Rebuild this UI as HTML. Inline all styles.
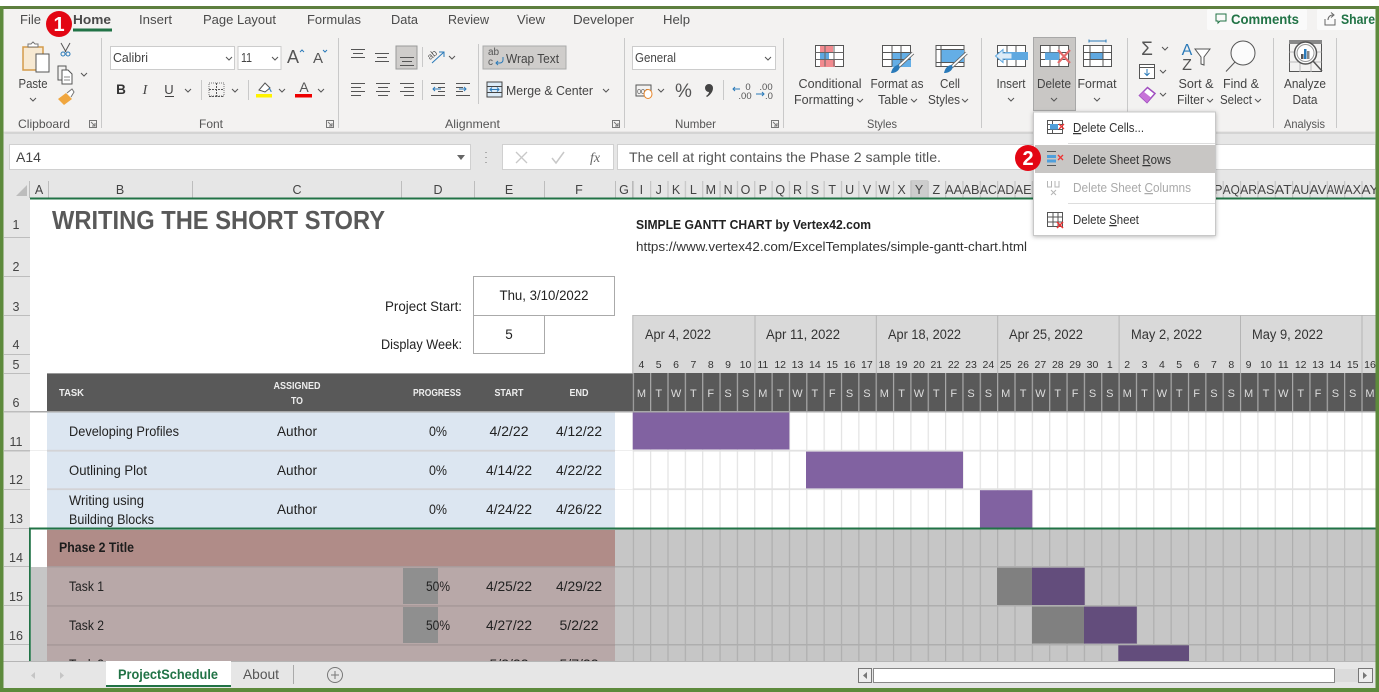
<!DOCTYPE html>
<html><head><meta charset="utf-8"><style>
html,body{margin:0;padding:0;background:#fff;width:1379px;height:692px;overflow:hidden}
svg{display:block}
text{font-family:"Liberation Sans",sans-serif;font-size:12px;fill:#444}
.m{text-anchor:middle}.e{text-anchor:end}
.t{font-size:13px;fill:#4a4a4a}
.r{font-size:12.5px;fill:#444}
.g{font-size:12px;fill:#555}
.c{font-size:12.5px;fill:#444}
.d{font-size:13.5px;fill:#222}
.h{font-size:10px;fill:#eee;font-weight:bold}
.n{font-size:10.5px;fill:#333}
.u{text-decoration:underline}
.ch{fill:none;stroke:#555;stroke-width:1}
</style></head><body>
<svg width="1379" height="692" viewBox="0 0 1379 692" xmlns="http://www.w3.org/2000/svg">
<defs>
<pattern id="gw" x="632.7" y="0" width="17.35" height="10" patternUnits="userSpaceOnUse"><rect x="0" width="1.2" height="10" fill="#e2e2e2"/></pattern>
<pattern id="gg" x="632.7" y="0" width="17.35" height="10" patternUnits="userSpaceOnUse"><rect x="0" width="1.2" height="10" fill="#aeaeae"/></pattern>
<pattern id="gd" x="632.7" y="0" width="17.35" height="10" patternUnits="userSpaceOnUse"><rect x="0" width="1.2" height="10" fill="#a9a9a9"/></pattern>
<filter id="sh" x="-10%" y="-10%" width="120%" height="120%"><feDropShadow dx="0" dy="1" stdDeviation="2" flood-color="#000" flood-opacity=".28"/></filter>
<filter id="bl"><feGaussianBlur stdDeviation="1.5"/></filter>
</defs>

<rect width="1379" height="692" fill="#fff"/>

<!-- ribbon -->
<rect x="3" y="9" width="1373" height="124" fill="#f3f2f1"/>
<rect x="3" y="132" width="1373" height="3" fill="#bbb" filter="url(#bl)"/>
<rect x="3" y="134" width="1373" height="46" fill="#e6e6e6"/>

<!-- tabs -->
<text class="t" x="20" y="24" textLength="21" lengthAdjust="spacingAndGlyphs">File</text>
<text class="t" x="73" y="24" textLength="38" lengthAdjust="spacingAndGlyphs" style="font-weight:bold;fill:#4a4a4a">Home</text>
<rect x="73" y="28.5" width="39" height="3" fill="#217346"/>
<text class="t" x="139" y="24" textLength="33" lengthAdjust="spacingAndGlyphs">Insert</text>
<text class="t" x="203" y="24" textLength="73" lengthAdjust="spacingAndGlyphs">Page Layout</text>
<text class="t" x="307" y="24" textLength="54" lengthAdjust="spacingAndGlyphs">Formulas</text>
<text class="t" x="391" y="24" textLength="27" lengthAdjust="spacingAndGlyphs">Data</text>
<text class="t" x="448" y="24" textLength="41" lengthAdjust="spacingAndGlyphs">Review</text>
<text class="t" x="517" y="24" textLength="28" lengthAdjust="spacingAndGlyphs">View</text>
<text class="t" x="573" y="24" textLength="61" lengthAdjust="spacingAndGlyphs">Developer</text>
<text class="t" x="663" y="24" textLength="27" lengthAdjust="spacingAndGlyphs">Help</text>

<rect x="1207" y="9" width="100" height="21" rx="2" fill="#fafafa"/>
<rect x="1317" y="9" width="58" height="21" rx="2" fill="#fafafa"/>
<path d="M1216 14h10v7h-6l-2 2v-2h-2z" fill="none" stroke="#217346"/>
<text x="1231" y="24" textLength="68" lengthAdjust="spacingAndGlyphs" style="font-size:13.5px;font-weight:bold;fill:#217346">Comments</text>
<path d="M1325 19v6h10v-6M1328 20c0-3 2-5 5-5M1331 12.500l3 2.500-3 2.500" fill="none" stroke="#666"/>
<text x="1341" y="24" textLength="34" lengthAdjust="spacingAndGlyphs" style="font-size:13.5px;font-weight:bold;fill:#217346">Share</text>

<!-- ribbon separators -->
<g fill="#c9c9c9">
<rect x="101" y="38" width="1" height="90"/><rect x="338" y="38" width="1" height="90"/><rect x="624" y="38" width="1" height="90"/><rect x="783" y="38" width="1" height="90"/><rect x="981" y="38" width="1" height="90"/><rect x="1127" y="38" width="1" height="90"/><rect x="1273" y="38" width="1" height="90"/><rect x="1336" y="38" width="1" height="90"/>
<rect x="201" y="80" width="1" height="20"/><rect x="248" y="80" width="1" height="20"/><rect x="422" y="47" width="1" height="20"/><rect x="422" y="80" width="1" height="20"/><rect x="478" y="44" width="1" height="60"/><rect x="723" y="80" width="1" height="20"/>
</g>

<!-- group labels -->
<text class="g" x="18" y="128" textLength="52" lengthAdjust="spacingAndGlyphs">Clipboard</text>
<text class="g" x="199" y="128" textLength="24" lengthAdjust="spacingAndGlyphs">Font</text>
<text class="g" x="445" y="128" textLength="55" lengthAdjust="spacingAndGlyphs">Alignment</text>
<text class="g" x="675" y="128" textLength="41" lengthAdjust="spacingAndGlyphs">Number</text>
<text class="g" x="867" y="128" textLength="30" lengthAdjust="spacingAndGlyphs">Styles</text>
<text class="g" x="1284" y="128" textLength="41" lengthAdjust="spacingAndGlyphs">Analysis</text>
<g fill="none" stroke="#777"><path d="M89.500 120.500h7v7h-7zM91 122l4 4M95 123v3h-3"/><path d="M326.500 120.500h7v7h-7zM328 122l4 4M332 123v3h-3"/><path d="M612.500 120.500h7v7h-7zM614 122l4 4M618 123v3h-3"/><path d="M771.500 120.500h7v7h-7zM773 122l4 4M777 123v3h-3"/></g>

<!-- clipboard -->
<path d="M23 47h20v23h-20z" fill="#f7e9d2" stroke="#d49b4a" stroke-width="1.5"/>
<path d="M28 47v-3h3l2-2 2 2h3v3z" fill="#fff" stroke="#777"/>
<rect x="36" y="54" width="13" height="18" fill="#fff" stroke="#555"/>
<text class="r" x="33" y="88" text-anchor="middle" textLength="29" lengthAdjust="spacingAndGlyphs">Paste</text>
<path class="ch" d="M30 98l3 3 3-3"/>
<path d="M61 43l5 9M70 43l-5 9" fill="none" stroke="#555"/><circle cx="63" cy="54" r="2" fill="none" stroke="#2a7ab9"/><circle cx="68" cy="54" r="2" fill="none" stroke="#2a7ab9"/>
<path d="M58 66h8v14h-8z" fill="#f3f2f1" stroke="#555"/><path d="M62 70h6l4 4v10h-10z" fill="#fff" stroke="#555"/><path d="M64 77h6M64 80h6" stroke="#888"/>
<path class="ch" d="M81 73l3 3 3-3"/>
<path d="M58 99l8-6 6 6-8 6z" fill="#f0a63e"/><path d="M67 93l5-4 2 3-3 5" fill="#fff" stroke="#777"/>

<!-- font -->
<rect x="110.500" y="46.500" width="124" height="23" fill="#fff" stroke="#ccc"/>
<text class="c" x="113" y="62" textLength="35" lengthAdjust="spacingAndGlyphs">Calibri</text>
<path class="ch" d="M226 57l3 3 3-3"/>
<rect x="238" y="46.500" width="43" height="23" fill="#fff" stroke="#ccc"/>
<text class="c" x="241" y="62" textLength="11" lengthAdjust="spacingAndGlyphs">11</text>
<path class="ch" d="M272 57l3 3 3-3"/>
<text x="293" y="63" class="m" style="font-size:18px;fill:#555">A</text><path d="M300 52l2-2 2 2" fill="none" stroke="#2a7ab9"/>
<text x="318" y="63" class="m" style="font-size:15px;fill:#555">A</text><path d="M323 50l2 2 2-2" fill="none" stroke="#2a7ab9"/>
<text x="121" y="94" class="m" style="font-weight:bold;fill:#333;font-size:13.5px">B</text>
<text x="145" y="94" class="m" style="font-style:italic;font-family:'Liberation Serif',serif;fill:#444;font-size:14px">I</text>
<text x="169" y="94" class="m" style="fill:#444;font-size:13px">U</text><rect x="165" y="96" width="9" height="1" fill="#444"/>
<path class="ch" d="M185 89l3 3 3-3"/>
<rect x="209" y="83" width="15" height="13" fill="none" stroke="#777" stroke-dasharray="1 1"/><path d="M209 96.500h15M216.500 83v13M209 89.500h15" stroke="#555" stroke-dasharray="2 1" fill="none"/>
<path class="ch" d="M232 89l3 3 3-3"/>
<path d="M259 90l6-7 5 5-5 4z" fill="#fff" stroke="#555"/><path d="M269 88l2 3v1" stroke="#2a7ab9" fill="none"/><rect x="256" y="94" width="16" height="3.500" fill="#fff200"/>
<path class="ch" d="M279 89l3 3 3-3"/>
<text x="304" y="92" class="m" style="font-size:14px;fill:#555">A</text><rect x="295" y="94" width="17" height="3.500" fill="#e00"/>
<path class="ch" d="M318 89l3 3 3-3"/>

<!-- alignment -->
<g stroke="#555" fill="none">
<path d="M351 49.500h14M353 53.500h10M351 57.500h14"/>
<path d="M375 53.500h14M377 57.500h10M375 61.500h14"/>
<path d="M351 83.500h14M351 87.500h10M351 91.500h14M351 95.500h10"/>
<path d="M376 83.500h14M378 87.500h10M376 91.500h14M378 95.500h10"/>
<path d="M400 83.500h14M404 87.500h10M400 91.500h14M404 95.500h10"/>
<path d="M431 83.500h14M438 87.500h7M438 91.500h7M431 95.500h14"/>
<path d="M456 83.500h14M456 87.500h7M456 91.500h7M456 95.500h14"/>
</g>
<rect x="396" y="46" width="21" height="23" fill="#cfcdcb" stroke="#999"/>
<path d="M400 57.500h14M402 61.500h10M400 65.500h14" stroke="#555" fill="none"/>
<path d="M432 63l12-11M439 52h5v5" stroke="#2a7ab9" fill="none"/><text x="434" y="57" class="m" style="font-size:9px;fill:#555" transform="rotate(-40 434 57)">ab</text>
<path class="ch" d="M449 56l3 3 3-3"/>
<path d="M433 89h8M435 87l-2 2 2 2" stroke="#2a7ab9" fill="none"/>
<path d="M459 89h7M464 87l2 2-2 2" stroke="#2a7ab9" fill="none"/>
<rect x="483" y="46" width="83" height="23" fill="#cfcdcb" stroke="#aaa"/>
<text x="488" y="55" style="font-size:10px;fill:#555">ab</text><text x="488" y="65" style="font-size:10px;fill:#555">c</text>
<path d="M503 57v3a3 3 0 0 1-3 3h-4M498 61l-2 2 2 2" stroke="#2a7ab9" fill="none"/>
<text class="c" x="506" y="63" textLength="53" lengthAdjust="spacingAndGlyphs">Wrap Text</text>
<rect x="487" y="82" width="15" height="15" fill="#dcebf7" stroke="#444"/><path d="M487 86.500h15M487 92.500h15" stroke="#444"/><path d="M490 89.500h9M492 87.500l-2 2 2 2M497 87.500l2 2-2 2" stroke="#2a7ab9" fill="none"/>
<text class="c" x="506" y="95" textLength="87" lengthAdjust="spacingAndGlyphs">Merge &amp; Center</text>
<path class="ch" d="M603 89l3 3 3-3"/>

<!-- number -->
<rect x="632.500" y="46.500" width="143" height="23" fill="#fff" stroke="#ccc"/>
<text class="c" x="635" y="62" textLength="41" lengthAdjust="spacingAndGlyphs">General</text>
<path class="ch" d="M765 57l3 3 3-3"/>
<rect x="636" y="85" width="15" height="11" fill="#f3f2f1" stroke="#555"/><text x="643" y="94" class="m" style="font-size:7px;fill:#555">000</text><ellipse cx="648" cy="94" rx="4" ry="4.500" fill="#fff" stroke="#e8862a"/>
<path class="ch" d="M658 89l3 3 3-3"/>
<text x="683.500" y="97" class="m" style="font-size:19px;fill:#555">%</text>
<path d="M709 84a4 4 0 0 1 4 4c0 4-3 7-6 9l-1-1c2-1 3-3 3-4a4 4 0 0 1 0-8z" fill="#444"/>
<text x="748" y="90" style="font-size:9.500px;fill:#555" class="m">0</text><text x="745" y="99" style="font-size:9.500px;fill:#555" class="m">.00</text><path d="M733 89h7M735 87l-2 2 2 2" stroke="#2a7ab9" fill="none"/>
<text x="766" y="90" style="font-size:9.500px;fill:#555" class="m">.00</text><text x="769" y="99" style="font-size:9.500px;fill:#555" class="m">.0</text><path d="M756 94h8M762 92l2 2-2 2" stroke="#2a7ab9" fill="none"/>

<!-- conditional formatting -->
<rect x="815.500" y="45.500" width="28" height="21" fill="#fff" stroke="#555"/>
<path d="M820 46h13v7h-13zM820 60h15v7h-15z" fill="#f28a8f"/><rect x="820" y="53" width="9" height="7" fill="#5fa8e0"/>
<path d="M815.500 52.500h28M815.500 59.500h28M825 45.500v21M834 45.500v21" stroke="#666" fill="none"/>
<text class="r" x="830" y="88" text-anchor="middle" textLength="63" lengthAdjust="spacingAndGlyphs">Conditional</text>
<text class="r" x="794" y="104" textLength="60" lengthAdjust="spacingAndGlyphs">Formatting</text><path class="ch" d="M857 99l3 3 3-3"/>
<!-- format as table -->
<rect x="882.500" y="45.500" width="28" height="21" fill="#fff" stroke="#555"/>
<path d="M892 53h19v14h-19z" fill="#64aee6"/><path d="M882.500 52.500h28M882.500 59.500h28M892 45.500v21M901 45.500v21" stroke="#555" fill="none"/>
<path d="M913 53l-15 14" stroke="#666" stroke-width="3.500"/><path d="M913 53l-15 14" stroke="#fff" stroke-width="1.800"/><path d="M891 73c1-5 4-8 8-8 2 4-2 8-8 8z" fill="#2a7ab9"/>
<text class="r" x="897" y="88" text-anchor="middle" textLength="53" lengthAdjust="spacingAndGlyphs">Format as</text>
<text class="r" x="878" y="104" textLength="30" lengthAdjust="spacingAndGlyphs">Table</text><path class="ch" d="M911 99l3 3 3-3"/>
<!-- cell styles -->
<rect x="936" y="45.500" width="28" height="21" fill="#fff" stroke="#555"/>
<rect x="941" y="50" width="23" height="12" fill="#64aee6"/><path d="M936 49.500h28M936 62.500h28M941 45.500v21" stroke="#555" fill="none"/>
<path d="M966.500 53l-15 14" stroke="#666" stroke-width="3.500"/><path d="M966.500 53l-15 14" stroke="#fff" stroke-width="1.800"/><path d="M944 73c1-5 4-8 8-8 2 4-2 8-8 8z" fill="#2a7ab9"/>
<text class="r" x="950" y="88" text-anchor="middle" textLength="20" lengthAdjust="spacingAndGlyphs">Cell</text>
<text class="r" x="928" y="104" textLength="32" lengthAdjust="spacingAndGlyphs">Styles</text><path class="ch" d="M962 99l3 3 3-3"/>

<!-- insert -->
<rect x="997.500" y="45.500" width="28" height="21" fill="#fff" stroke="#555"/>
<path d="M997.500 52.500h28M997.500 59.500h28M1007 45.500v21M1016 45.500v21" stroke="#555" fill="none"/>
<rect x="1005" y="52" width="23" height="8" fill="#5fa8e0"/>
<path d="M1003 49.500l-7.500 6.500 7.500 6.500v-3.500h9v-6h-9z" fill="#dcebf7" stroke="#5fa8e0"/>
<text class="r" x="1011" y="88" text-anchor="middle" textLength="29" lengthAdjust="spacingAndGlyphs">Insert</text>
<path class="ch" d="M1008 98l3 3 3-3"/>
<!-- delete -->
<rect x="1033.500" y="37.500" width="42" height="73" fill="#c9c7c5" stroke="#a8a8a8"/>
<rect x="1040.500" y="45.500" width="28" height="21" fill="#fff" stroke="#555"/>
<path d="M1040.500 52.500h28M1040.500 59.500h28M1050 45.500v21M1059 45.500v21" stroke="#555" fill="none"/>
<rect x="1045" y="52.500" width="14" height="7.500" fill="#5fa8e0"/>
<path d="M1058 50l12 13M1070 50l-12 13" stroke="#e46a6a" stroke-width="2.200"/>
<text class="r" x="1054" y="88" text-anchor="middle" textLength="34" lengthAdjust="spacingAndGlyphs">Delete</text>
<path class="ch" d="M1051 98l3 3 3-3"/>
<!-- format -->
<path d="M1089 41h17M1089 39.500v3M1106 39.500v3" stroke="#2a7ab9" fill="none"/>
<rect x="1083.500" y="45.500" width="28" height="21" fill="#fff" stroke="#555"/>
<rect x="1090" y="52" width="13" height="8" fill="#5fa8e0"/>
<path d="M1083.500 52.500h28M1083.500 59.500h28M1090 45.500v21M1103 45.500v21" stroke="#555" fill="none"/>
<text class="r" x="1097" y="88" text-anchor="middle" textLength="39" lengthAdjust="spacingAndGlyphs">Format</text>
<path class="ch" d="M1094 98l3 3 3-3"/>

<!-- editing -->
<text x="1147" y="55" class="m" style="font-size:19px;fill:#555">Σ</text><path class="ch" d="M1162 47l3 3 3-3"/>
<rect x="1139.500" y="64.500" width="15" height="14" fill="#fff" stroke="#555"/><path d="M1139.500 67.500h15" stroke="#555"/><path d="M1147 69v6M1144.500 73l2.500 2.500 2.500-2.500" stroke="#2a7ab9" fill="none"/><path class="ch" d="M1160 70l3 3 3-3"/>
<path d="M1139.500 95.500l8-8 7.500 6-8 9z" fill="#fff" stroke="#a04fc0" stroke-width="1.500"/><path d="M1139.500 95.500l4-4 7.500 6-4 5z" fill="#c774d8"/><path class="ch" d="M1160 93l3 3 3-3"/>
<text x="1187" y="55" class="m" style="font-size:16px;fill:#2a7ab9">A</text><text x="1187" y="70" class="m" style="font-size:16px;fill:#555">Z</text>
<path d="M1195 49h15l-6 8v8l-3-1v-7z" fill="#fff" stroke="#555"/>
<text class="r" x="1196" y="88" text-anchor="middle" textLength="35" lengthAdjust="spacingAndGlyphs">Sort &amp;</text>
<text class="r" x="1177" y="104" textLength="27" lengthAdjust="spacingAndGlyphs">Filter</text><path class="ch" d="M1207 99l3 3 3-3"/>
<circle cx="1243" cy="53" r="12" fill="#fbfbfb" stroke="#555"/><path d="M1235 62l-9 9.500" stroke="#555"/>
<text class="r" x="1241" y="88" text-anchor="middle" textLength="36" lengthAdjust="spacingAndGlyphs">Find &amp;</text>
<text class="r" x="1220" y="104" textLength="32" lengthAdjust="spacingAndGlyphs">Select</text><path class="ch" d="M1255 99l3 3 3-3"/>
<!-- analyze -->
<rect x="1289.500" y="41.500" width="32" height="30" fill="#f3f2f1" stroke="#555"/><rect x="1289" y="40" width="33" height="4" fill="#888"/>
<path d="M1289.500 52h32M1289.500 62h32M1300 45v27M1311 45v27" stroke="#bbb"/>
<circle cx="1305.500" cy="53" r="11" fill="#fff" stroke="#555" stroke-width="1.500"/><circle cx="1305.500" cy="53" r="8.500" fill="#fff" stroke="#999"/><path d="M1313 61l9 10" stroke="#555" stroke-width="1.500"/>
<rect x="1301" y="54" width="2.500" height="5" fill="#555"/><rect x="1304" y="49" width="2.500" height="10" fill="#2a7ab9"/><rect x="1307" y="51" width="2.500" height="8" fill="#888"/>
<text class="r" x="1305" y="88" text-anchor="middle" textLength="42" lengthAdjust="spacingAndGlyphs">Analyze</text>
<text class="r" x="1305" y="104" text-anchor="middle" textLength="25" lengthAdjust="spacingAndGlyphs">Data</text>

<!-- formula bar -->
<rect x="9.500" y="144.500" width="461" height="25" fill="#fff" stroke="#d0d0d0"/>
<text x="16" y="162" textLength="25" lengthAdjust="spacingAndGlyphs" style="font-size:13.5px;fill:#444">A14</text>
<path d="M457 155l4 5 4-5z" fill="#666"/>
<path d="M486 152v1M486 157v1M486 162v1" stroke="#999" stroke-width="1.500"/>
<rect x="502.500" y="144.500" width="111" height="25" fill="#fff" stroke="#d0d0d0"/>
<path d="M516 152l11 11M527 152l-11 11" stroke="#c8c8c8" stroke-width="1.300"/>
<path d="M552 158l4 5 8-11" stroke="#c8c8c8" stroke-width="1.500" fill="none"/>
<text x="595" y="162" class="m" style="font-family:'Liberation Serif',serif;font-style:italic;font-size:14px;fill:#666">fx</text>
<rect x="617.500" y="144.500" width="758" height="25" fill="#fff" stroke="#d0d0d0"/>
<text x="629" y="162" textLength="312" lengthAdjust="spacingAndGlyphs" style="font-size:14px;fill:#555">The cell at right contains the Phase 2 sample title.</text>

<!-- column headings -->
<rect x="3" y="180" width="1373" height="18" fill="#e6e6e6"/>
<rect x="3" y="198" width="27" height="463" fill="#e6e6e6"/>
<path d="M16 196h11v-11z" fill="#bdbdbd"/>
<rect x="910.500" y="180" width="17.350" height="18" fill="#cdcdcd"/>
<g fill="#bdbdbd">
<rect x="29" y="181" width="1" height="17"/><rect x="48" y="181" width="1" height="17"/><rect x="192" y="181" width="1" height="17"/><rect x="401" y="181" width="1" height="17"/><rect x="474" y="181" width="1" height="17"/><rect x="544" y="181" width="1" height="17"/><rect x="615" y="181" width="1" height="17"/><rect x="632" y="181" width="1" height="17"/>
</g>
<rect x="632" y="181" width="744" height="17" fill="url(#gg)" opacity=".6"/>
<g>
<text class="m c" x="39" y="194">A</text><text class="m c" x="120" y="194">B</text><text class="m c" x="297" y="194">C</text><text class="m c" x="438" y="194">D</text><text class="m c" x="509" y="194">E</text><text class="m c" x="579" y="194">F</text><text class="m c" x="624" y="194">G</text>
<text class="m c" x="641.400 658.700 676.100 693.400 710.800 728.100 745.500 762.800 780.200 797.500 814.900 832.200 849.600 866.900 884.300 901.600 919 936.300" y="194">IJKLMNOPQRSTUVWXYZ</text>
<text class="m c" x="953.700" y="194" textLength="17" lengthAdjust="spacingAndGlyphs">AA</text><text class="m c" x="971" y="194" textLength="17" lengthAdjust="spacingAndGlyphs">AB</text><text class="m c" x="988.400" y="194" textLength="17" lengthAdjust="spacingAndGlyphs">AC</text><text class="m c" x="1005.700" y="194" textLength="17" lengthAdjust="spacingAndGlyphs">AD</text><text class="m c" x="1023.100" y="194" textLength="17" lengthAdjust="spacingAndGlyphs">AE</text>
<text class="m c" x="1214" y="194" textLength="17" lengthAdjust="spacingAndGlyphs">AP</text><text class="m c" x="1231.300" y="194" textLength="17" lengthAdjust="spacingAndGlyphs">AQ</text><text class="m c" x="1248.600" y="194" textLength="17" lengthAdjust="spacingAndGlyphs">AR</text><text class="m c" x="1266" y="194" textLength="17" lengthAdjust="spacingAndGlyphs">AS</text><text class="m c" x="1283.300" y="194" textLength="17" lengthAdjust="spacingAndGlyphs">AT</text><text class="m c" x="1300.700" y="194" textLength="17" lengthAdjust="spacingAndGlyphs">AU</text><text class="m c" x="1318" y="194" textLength="17" lengthAdjust="spacingAndGlyphs">AV</text><text class="m c" x="1335.400" y="194" textLength="17" lengthAdjust="spacingAndGlyphs">AW</text><text class="m c" x="1352.700" y="194" textLength="17" lengthAdjust="spacingAndGlyphs">AX</text><text class="m c" x="1370" y="194" textLength="17" lengthAdjust="spacingAndGlyphs">AY</text>
</g>
<rect x="30" y="197.500" width="1346" height="2" fill="#217346"/>

<!-- row heading separators -->
<g fill="#bdbdbd">
<rect x="4" y="237" width="26" height="1"/><rect x="4" y="276" width="26" height="1"/><rect x="4" y="315" width="26" height="1"/><rect x="4" y="354" width="26" height="1"/><rect x="4" y="373" width="26" height="1"/><rect x="4" y="411" width="26" height="1.500"/><rect x="4" y="450" width="26" height="1.500"/><rect x="4" y="489" width="26" height="1"/><rect x="4" y="528" width="26" height="1"/><rect x="4" y="566" width="26" height="1"/><rect x="4" y="605" width="26" height="1"/><rect x="4" y="644" width="26" height="1"/>
</g>
<g>
<text class="m c" x="16" y="229">1</text><text class="m c" x="16" y="271">2</text><text class="m c" x="16" y="311">3</text><text class="m c" x="16" y="349">4</text><text class="m c" x="16" y="369">5</text><text class="m c" x="16" y="407">6</text><text class="m c" x="16" y="446">11</text><text class="m c" x="16" y="484">12</text><text class="m c" x="16" y="523">13</text><text class="m c" x="16" y="562">14</text><text class="m c" x="16" y="601">15</text><text class="m c" x="16" y="640">16</text>
</g>

<!-- sheet top -->
<text x="52" y="229" textLength="333" lengthAdjust="spacingAndGlyphs" style="font-size:26px;font-weight:bold;fill:#595959">WRITING THE SHORT STORY</text>
<text x="636" y="229" textLength="235" lengthAdjust="spacingAndGlyphs" style="font-size:12.5px;font-weight:bold;fill:#222">SIMPLE GANTT CHART by Vertex42.com</text>
<text x="636" y="251" textLength="391" lengthAdjust="spacingAndGlyphs" style="font-size:12.5px;fill:#333">https://www.vertex42.com/ExcelTemplates/simple-gantt-chart.html</text>
<text class="d e" x="462" y="311" textLength="77" lengthAdjust="spacingAndGlyphs">Project Start:</text>
<text class="d e" x="462" y="349" textLength="81" lengthAdjust="spacingAndGlyphs">Display Week:</text>
<rect x="473.500" y="276.500" width="141" height="39" fill="#fff" stroke="#aaa"/>
<rect x="473.500" y="315.500" width="71" height="38" fill="#fff" stroke="#aaa"/>
<text class="d m" x="544" y="300" textLength="89" lengthAdjust="spacingAndGlyphs">Thu, 3/10/2022</text>
<text class="d m" x="509" y="339">5</text>

<!-- gantt weeks -->
<rect x="632.700" y="315" width="743" height="58" fill="#d9d9d9"/>
<rect x="632.700" y="315" width="743" height="1" fill="#bcbcbc"/>
<g fill="#b5b5b5"><rect x="632.300" y="315" width="1" height="58"/><rect x="754.500" y="315" width="1" height="58"/><rect x="875.800" y="315" width="1" height="58"/><rect x="997.200" y="315" width="1" height="58"/><rect x="1118.600" y="315" width="1" height="58"/><rect x="1240" y="315" width="1" height="58"/><rect x="1361.500" y="315" width="1" height="58"/></g>
<text x="645" y="339" textLength="66" lengthAdjust="spacingAndGlyphs" style="font-size:13.500px;fill:#333">Apr 4, 2022</text>
<text x="766" y="339" textLength="74" lengthAdjust="spacingAndGlyphs" style="font-size:13.500px;fill:#333">Apr 11, 2022</text>
<text x="888" y="339" textLength="73" lengthAdjust="spacingAndGlyphs" style="font-size:13.500px;fill:#333">Apr 18, 2022</text>
<text x="1009" y="339" textLength="74" lengthAdjust="spacingAndGlyphs" style="font-size:13.500px;fill:#333">Apr 25, 2022</text>
<text x="1131" y="339" textLength="71" lengthAdjust="spacingAndGlyphs" style="font-size:13.500px;fill:#333">May 2, 2022</text>
<text x="1252" y="339" textLength="71" lengthAdjust="spacingAndGlyphs" style="font-size:13.500px;fill:#333">May 9, 2022</text>
<g>
<text class="m n" y="368" x="641.400 658.700 676.100 693.400 710.800 728.100">456789</text>
<text class="m n" y="368" x="745.500">10</text><text class="m n" y="368" x="762.800">11</text><text class="m n" y="368" x="780.200">12</text><text class="m n" y="368" x="797.500">13</text><text class="m n" y="368" x="814.900">14</text><text class="m n" y="368" x="832.200">15</text><text class="m n" y="368" x="849.600">16</text><text class="m n" y="368" x="866.900">17</text><text class="m n" y="368" x="884.300">18</text><text class="m n" y="368" x="901.600">19</text><text class="m n" y="368" x="919">20</text><text class="m n" y="368" x="936.300">21</text><text class="m n" y="368" x="953.700">22</text><text class="m n" y="368" x="971">23</text><text class="m n" y="368" x="988.400">24</text><text class="m n" y="368" x="1005.700">25</text><text class="m n" y="368" x="1023.100">26</text><text class="m n" y="368" x="1040.400">27</text><text class="m n" y="368" x="1057.800">28</text><text class="m n" y="368" x="1075.100">29</text><text class="m n" y="368" x="1092.500">30</text>
<text class="m n" y="368" x="1109.800 1127.200 1144.500 1161.900 1179.200 1196.600 1213.900 1231.300 1248.600">123456789</text>
<text class="m n" y="368" x="1266">10</text><text class="m n" y="368" x="1283.300">11</text><text class="m n" y="368" x="1300.700">12</text><text class="m n" y="368" x="1318">13</text><text class="m n" y="368" x="1335.400">14</text><text class="m n" y="368" x="1352.700">15</text><text class="m n" y="368" x="1370">16</text>
</g>

<!-- table header -->
<rect x="47" y="373" width="1329" height="38" fill="#595959"/>
<rect x="47" y="373" width="586" height="1" fill="#999"/>
<rect x="632.700" y="373" width="743" height="38" fill="url(#gd)"/>
<rect x="30" y="411" width="1346" height="1.500" fill="#a8a8a8"/>
<text class="h" x="59" y="396" textLength="25" lengthAdjust="spacingAndGlyphs">TASK</text>
<text class="h m" x="297" y="389" textLength="47" lengthAdjust="spacingAndGlyphs">ASSIGNED</text>
<text class="h m" x="297" y="404" textLength="12" lengthAdjust="spacingAndGlyphs">TO</text>
<text class="h m" x="437" y="396" textLength="48" lengthAdjust="spacingAndGlyphs">PROGRESS</text>
<text class="h m" x="509" y="396" textLength="29" lengthAdjust="spacingAndGlyphs">START</text>
<text class="h m" x="579" y="396" textLength="19" lengthAdjust="spacingAndGlyphs">END</text>
<text class="m" style="font-size:11px;fill:#ddd" y="397" x="641.400 658.700 676.100 693.400 710.800 728.100 745.500 762.800 780.200 797.500 814.900 832.200 849.600 866.900 884.300 901.600 919 936.300 953.700 971 988.400 1005.700 1023.100 1040.400 1057.800 1075.100 1092.500 1109.800 1127.200 1144.500 1161.900 1179.200 1196.600 1213.900 1231.300 1248.600 1266 1283.300 1300.700 1318 1335.400 1352.700 1370">MTWTFSSMTWTFSSMTWTFSSMTWTFSSMTWTFSSMTWTFSSM</text>

<!-- blue rows -->
<rect x="47" y="412.500" width="568" height="115" fill="#dce6f1"/>
<rect x="47" y="449.800" width="568" height="1.800" fill="#d3d3d6"/>
<rect x="47" y="488.300" width="568" height="1.800" fill="#d3d3d6"/>
<rect x="632.700" y="412.500" width="743" height="115.500" fill="url(#gw)"/>
<rect x="632.700" y="449.800" width="743" height="1.800" fill="#e2e2e2"/>
<rect x="632.700" y="488.300" width="743" height="1.800" fill="#e2e2e2"/>
<rect x="30" y="450" width="17" height="1" fill="#eee"/><rect x="615" y="450" width="18" height="1" fill="#eee"/><rect x="615" y="489" width="18" height="1" fill="#eee"/>
<rect x="632.700" y="412.500" width="156.700" height="37" fill="#8162a1"/>
<rect x="806" y="451.600" width="157" height="36.800" fill="#8162a1"/>
<rect x="980" y="490.200" width="52.300" height="37.300" fill="#8162a1"/>

<text class="d" x="69" y="436" textLength="110" lengthAdjust="spacingAndGlyphs">Developing Profiles</text>
<text class="d" x="69" y="475" textLength="78" lengthAdjust="spacingAndGlyphs">Outlining Plot</text>
<text class="d" x="69" y="505" textLength="75" lengthAdjust="spacingAndGlyphs">Writing using</text>
<text class="d" x="69" y="524" textLength="85" lengthAdjust="spacingAndGlyphs">Building Blocks</text>
<text class="d m" x="297" y="436" textLength="40" lengthAdjust="spacingAndGlyphs">Author</text><text class="d m" x="297" y="475" textLength="40" lengthAdjust="spacingAndGlyphs">Author</text><text class="d m" x="297" y="514" textLength="40" lengthAdjust="spacingAndGlyphs">Author</text>
<text class="d m" x="438" y="436" textLength="18" lengthAdjust="spacingAndGlyphs">0%</text><text class="d m" x="438" y="475" textLength="18" lengthAdjust="spacingAndGlyphs">0%</text><text class="d m" x="438" y="514" textLength="18" lengthAdjust="spacingAndGlyphs">0%</text>
<text class="d m" x="509" y="436" textLength="39" lengthAdjust="spacingAndGlyphs">4/2/22</text><text class="d m" x="509" y="475" textLength="46" lengthAdjust="spacingAndGlyphs">4/14/22</text><text class="d m" x="509" y="514" textLength="46" lengthAdjust="spacingAndGlyphs">4/24/22</text>
<text class="d m" x="579" y="436" textLength="46" lengthAdjust="spacingAndGlyphs">4/12/22</text><text class="d m" x="579" y="475" textLength="46" lengthAdjust="spacingAndGlyphs">4/22/22</text><text class="d m" x="579" y="514" textLength="46" lengthAdjust="spacingAndGlyphs">4/26/22</text>

<!-- selected rows -->
<rect x="31" y="529" width="1345" height="132" fill="#c6c6c6"/>
<rect x="31" y="529" width="16" height="38" fill="#fff"/>
<rect x="47" y="530" width="568" height="36.500" fill="#b08c88"/>
<rect x="47" y="566.500" width="568" height="94.500" fill="#b8a8a8"/>
<rect x="47" y="605" width="568" height="1.800" fill="#a99b9b"/>
<rect x="47" y="644" width="568" height="1.800" fill="#a99b9b"/>
<rect x="47" y="566" width="568" height="1.500" fill="#a99b9b"/>
<rect x="403" y="568" width="35" height="36" fill="#8f8f8f"/>
<rect x="403" y="607" width="35" height="36" fill="#8f8f8f"/>
<rect x="632.700" y="529" width="743" height="132" fill="url(#gg)"/>
<rect x="615" y="566" width="761" height="1.500" fill="#aeaeae"/>
<rect x="615" y="605" width="761" height="1.500" fill="#aeaeae"/>
<rect x="615" y="644" width="761" height="1.500" fill="#aeaeae"/>
<rect x="997" y="567.700" width="35.500" height="37.300" fill="#808080"/>
<rect x="1032" y="567.700" width="52.700" height="37.300" fill="#634d7c"/>
<rect x="1032" y="606.600" width="52" height="37" fill="#808080"/>
<rect x="1084" y="606.600" width="52.800" height="37" fill="#634d7c"/>
<rect x="1118.300" y="645.300" width="70.700" height="16" fill="#634d7c"/>
<rect x="29" y="527.500" width="1347" height="2" fill="#217346"/>
<rect x="29" y="527.500" width="1.800" height="134" fill="#217346"/>

<text x="59" y="552" textLength="75" lengthAdjust="spacingAndGlyphs" style="font-size:13.500px;font-weight:bold;fill:#1c1c1c">Phase 2 Title</text>
<text class="d" x="69" y="591" textLength="35" lengthAdjust="spacingAndGlyphs">Task 1</text>
<text class="d" x="69" y="630" textLength="35" lengthAdjust="spacingAndGlyphs">Task 2</text>
<text class="d m" x="438" y="591" textLength="24" lengthAdjust="spacingAndGlyphs">50%</text><text class="d m" x="438" y="630" textLength="24" lengthAdjust="spacingAndGlyphs">50%</text>
<text class="d m" x="509" y="591" textLength="46" lengthAdjust="spacingAndGlyphs">4/25/22</text><text class="d m" x="509" y="630" textLength="46" lengthAdjust="spacingAndGlyphs">4/27/22</text>
<text class="d m" x="579" y="591" textLength="46" lengthAdjust="spacingAndGlyphs">4/29/22</text><text class="d m" x="579" y="630" textLength="39" lengthAdjust="spacingAndGlyphs">5/2/22</text>
<text class="d" x="69" y="669" textLength="35" lengthAdjust="spacingAndGlyphs">Task 3</text>
<text class="d m" x="509" y="669" textLength="39" lengthAdjust="spacingAndGlyphs">5/3/22</text>
<text class="d m" x="579" y="669" textLength="39" lengthAdjust="spacingAndGlyphs">5/7/22</text>

<!-- menu -->
<rect x="1033.500" y="112" width="182" height="123.500" fill="#fff" stroke="#c8c8c8" filter="url(#sh)"/>
<rect x="1035" y="145" width="180" height="28" fill="#c8c6c4"/>
<rect x="1068" y="143" width="147" height="1" fill="#ddd"/>
<rect x="1068" y="203" width="147" height="1" fill="#ddd"/>
<text x="1073" y="132" textLength="71" lengthAdjust="spacingAndGlyphs" style="font-size:12.500px;fill:#333"><tspan class="u">D</tspan>elete Cells...</text>
<text x="1073" y="164" textLength="98" lengthAdjust="spacingAndGlyphs" style="font-size:12.500px;fill:#333">Delete Sheet <tspan class="u">R</tspan>ows</text>
<text x="1073" y="192" textLength="118" lengthAdjust="spacingAndGlyphs" style="font-size:12.500px;fill:#aaa">Delete Sheet <tspan class="u">C</tspan>olumns</text>
<text x="1073" y="224" textLength="66" lengthAdjust="spacingAndGlyphs" style="font-size:12.500px;fill:#333">Delete <tspan class="u">S</tspan>heet</text>
<!-- menu icons -->
<path d="M1047.500 120.500h15v13h-15zM1047.500 124.500h15M1047.500 129.500h15M1052.500 120.500v13" fill="#fff" stroke="#555"/>
<rect x="1050" y="124" width="8" height="5.500" fill="#4f9fdb"/>
<path d="M1059 124l5 5M1064 124l-5 5" stroke="#e33" stroke-width="1.300"/>
<path d="M1047 151.500h9M1047 165.500h9" stroke="#555" fill="none"/><rect x="1047" y="155" width="9" height="3" fill="#4f9fdb"/><rect x="1047" y="159.500" width="9" height="3" fill="#4f9fdb"/>
<path d="M1058 155l5 5M1063 155l-5 5" stroke="#e33" stroke-width="1.300"/>
<path d="M1047.500 181v6h4v-6M1055 181v6h4v-6" stroke="#b5b5b5" fill="none"/><path d="M1051 190l5 5M1056 190l-5 5" stroke="#b5b5b5"/>
<path d="M1047.500 212.500h15v14h-15zM1047.500 217h15M1047.500 222h15M1053 212.500v14M1058 212.500v14" fill="#fff" stroke="#555"/>
<path d="M1057 222l6 6M1063 222l-6 6" stroke="#e33" stroke-width="1.500"/>

<!-- tab bar -->
<rect x="3" y="661" width="1373" height="27" fill="#e6e6e6"/>
<rect x="3" y="661" width="1373" height="1" fill="#b5b5b5"/>
<rect x="106" y="661" width="125" height="24" fill="#fff"/>
<rect x="106" y="685" width="125" height="2" fill="#217346"/>
<text class="m" x="168" y="679" textLength="100" lengthAdjust="spacingAndGlyphs" style="font-size:14px;font-weight:bold;fill:#217346">ProjectSchedule</text>
<text class="m" x="261" y="679" textLength="36" lengthAdjust="spacingAndGlyphs" style="font-size:14px;fill:#555">About</text>
<rect x="293" y="665" width="1" height="19" fill="#aaa"/>
<circle cx="335" cy="675" r="7.500" fill="none" stroke="#777"/><path d="M331 675h8M335 671v8" stroke="#777"/>
<path d="M35 672l-4 3.500 4 3.500z" fill="#c5c5c5"/><path d="M60 672l4 3.500-4 3.500z" fill="#c5c5c5"/>
<rect x="858.500" y="668.500" width="13" height="14" fill="#eee" stroke="#777"/><path d="M867 672l-4 3.500 4 3.500z" fill="#777"/>
<rect x="873.500" y="668.500" width="461" height="14" fill="#fff" stroke="#888"/>
<rect x="1335" y="669" width="23" height="13" fill="#dbdbdb"/>
<rect x="1358.500" y="668.500" width="14" height="14" fill="#eee" stroke="#777"/><path d="M1363 672l4 3.500-4 3.500z" fill="#777"/>

<!-- frame -->
<rect x="0" y="6" width="1379" height="3" fill="#5d7f3e"/>
<rect x="0" y="6" width="3.500" height="686" fill="#5d8a3c"/>
<rect x="1375.500" y="6" width="3.500" height="686" fill="#5d8a3c"/>
<rect x="0" y="688" width="1379" height="4" fill="#5d8a3c"/>

<!-- badges -->
<circle cx="59" cy="24" r="13" fill="#e30613"/>
<text class="m" x="59" y="31" style="font-size:20px;font-weight:bold;fill:#fff">1</text>
<circle cx="1028" cy="158" r="13" fill="#e30613"/>
<text class="m" x="1028" y="165" style="font-size:20px;font-weight:bold;fill:#fff">2</text>
</svg>
</body></html>
